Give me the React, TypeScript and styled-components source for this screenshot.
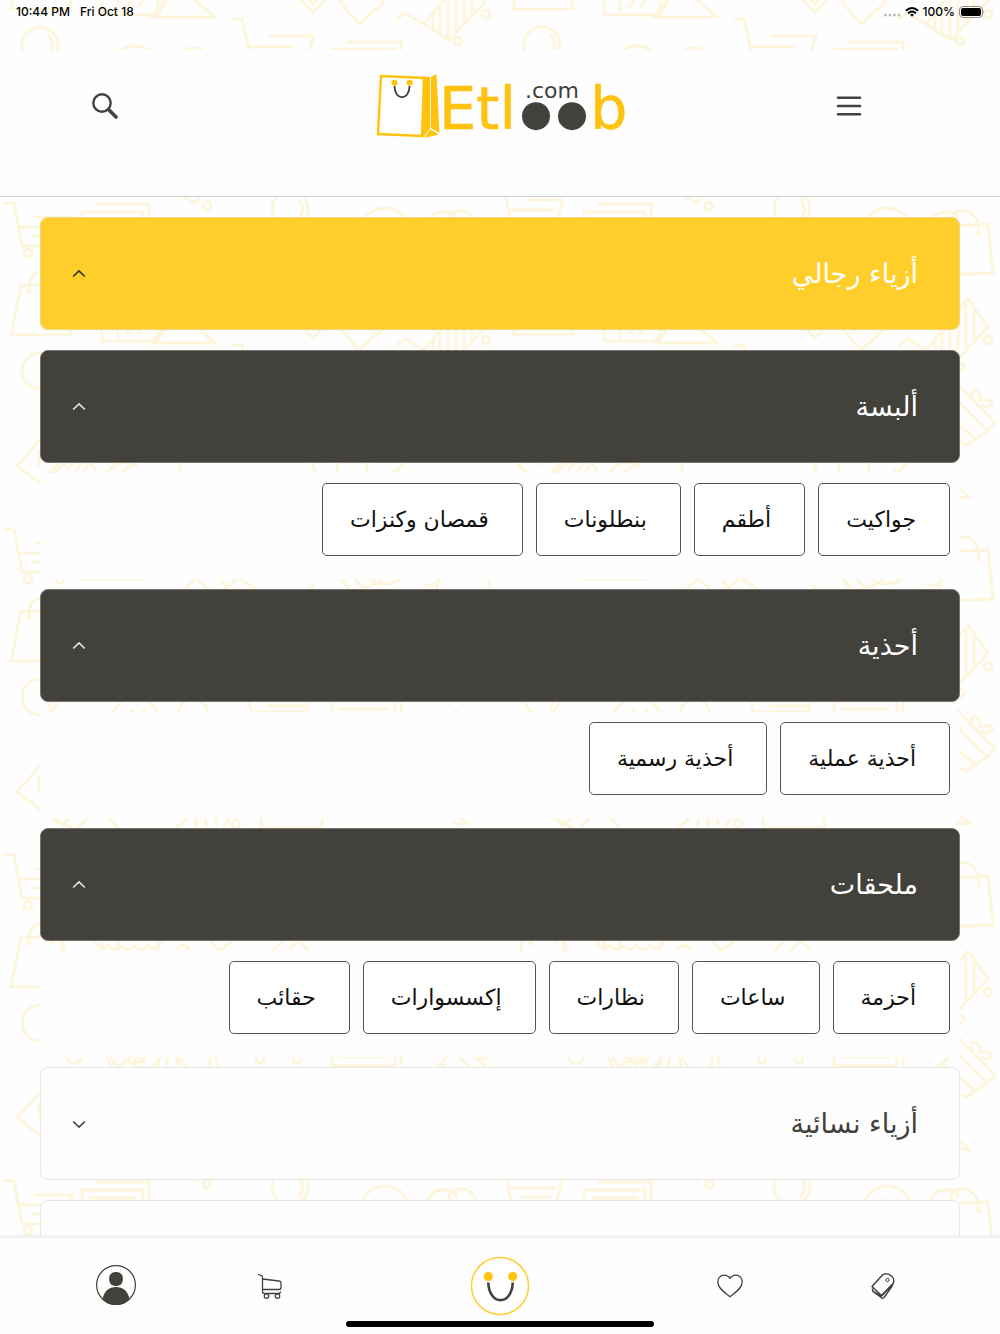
import React from "react";
import styled, { createGlobalStyle } from "styled-components";

const colors = {
  ink: "#42413c",
  yellow: "#ffce2b",
  brand: "#ffc20e",
  doodle: "#fdf6dc",
  white: "#fefefe",
};

const GlobalStyle = createGlobalStyle`
  *, *::before, *::after { box-sizing: border-box; }
  body { margin: 0; background: ${colors.white}; }
  button { font: inherit; color: inherit; padding: 0; border: 0; background: none; cursor: pointer; }
  svg { display: block; }
`;

const Screen = styled.div`
  position: relative;
  isolation: isolate;
  display: flex;
  flex-direction: column;
  height: 100vh;
  overflow: hidden;
  font-family: "DejaVu Sans", sans-serif;
  color: ${colors.ink};
`;

const Backdrop = styled.svg`
  position: absolute;
  inset: 0;
  width: 100%;
  height: 100%;
  z-index: -1;
`;

const StatusBar = styled.div`
  display: flex;
  justify-content: space-between;
  align-items: flex-start;
  height: 50px;
  padding: 4px 15px 0 16px;
  font: 500 12px/16px Inter, sans-serif;
  color: #000;
`;

const StatusGroup = styled.div<{ $gap: number }>`
  display: flex;
  align-items: center;
  gap: ${(p) => p.$gap}px;
`;

const Header = styled.header`
  display: flex;
  justify-content: space-between;
  align-items: flex-start;
  height: 147px;
  padding: 20px 129px 0 83px;
  background: ${colors.white};
  border-bottom: 1px solid #d0d0d0;
`;

const IconButton = styled.button`
  display: grid;
  place-items: center;
  width: 44px;
  height: 72px;
`;

const LogoLink = styled.a`
  display: block;
  margin-left: 50px;
`;

const Main = styled.main`
  flex: 1;
  min-height: 0;
  overflow-y: auto;
  scrollbar-width: none;
  padding: 20px 40px;
`;

const Bar = styled.button<{ $tone: "yellow" | "dark" | "plain" }>`
  display: flex;
  justify-content: space-between;
  align-items: center;
  width: 100%;
  height: 113px;
  padding: 0 41px 0 31px;
  border: 1px solid
    ${(p) => (p.$tone === "plain" ? "#e6e6e6" : p.$tone === "dark" ? "#77766f" : "#ecd68a")};
  border-radius: 8px;
  background: ${(p) =>
    p.$tone === "yellow" ? colors.yellow : p.$tone === "dark" ? colors.ink : colors.white};
  color: ${(p) => (p.$tone === "plain" ? colors.ink : "#fff")};
  font-size: 27px;
  line-height: 40px;
`;

const Stack = styled.div<{ $gap: number }>`
  display: flex;
  flex-direction: column;
  gap: ${(p) => p.$gap}px;
`;

const Chips = styled.div`
  display: flex;
  flex-wrap: wrap;
  gap: 13px;
  padding: 10px 10px 23px;
  background: ${colors.white};
`;

const Chip = styled.a`
  display: flex;
  align-items: center;
  height: 73px;
  padding: 0 33px 0 27px;
  border: 1px solid #55544f;
  border-radius: 5px;
  background: #fff;
  color: #111;
  font-size: 22px;
  line-height: 32px;
  text-decoration: none;
  white-space: nowrap;
`;

const BottomNav = styled.nav`
  position: relative;
  display: grid;
  grid-template-columns: 1fr 1fr 2fr 1fr 1fr;
  height: 98px;
  padding: 0 39px 1px;
  background: ${colors.white};
  border-top: 2px solid #f0f0f0;
  box-shadow: 0 -1px 3px rgba(0, 0, 0, 0.04);
`;

const NavLink = styled.a`
  display: grid;
  place-items: center;
  color: ${colors.ink};
`;

const HomeIndicator = styled.span`
  position: absolute;
  left: 50%;
  bottom: 7px;
  width: 308px;
  height: 6px;
  margin-left: -154px;
  border-radius: 3px;
  background: #000;
`;

const Doodles = () => (
  <Backdrop aria-hidden="true">
    <defs>
      <g id="doodle-goods">
        {/* shopping bag, left */}
        <path d="M29 285H21L11 335H71L62 285H29M29 291C28 277 35 272 41 272S54 277 53 291" />
        <circle cx="29" cy="291" r="1" />
        {/* framed picture */}
        <path d="M102 285H158V341H102ZM118 285V341M127 333L135 323M138 333L148 321" />
        <path d="M151 343H215L178 312ZM155 343L164 331" />
        {/* coupon tips */}
        <path d="M298 323L313 338L328 323L313 306ZM306 323L313 330L320 323M340 328L361 306L384 328L359 350Z" />
        {/* striped fish */}
        <path d="M397 345L405 339L424 350L466 299L486 327L449 366L424 350M433 340V356M440 332V361M448 323V365M456 313V358M464 304V349M472 309V341" />
        <circle cx="486" cy="340" r="4" />
        <circle cx="458" cy="367" r="4" />
        {/* balloon */}
        <circle cx="40" cy="45" r="18" />
        <path d="M49 35Q56 45 49 54M46 62L57 74" />
        {/* smiley and purse */}
        <circle cx="135" cy="71" r="25" />
        <path d="M128 62L132 58L136 62M141 62L145 58M120 76Q135 94 150 76M178 60Q181 48 193 48T208 60M172 62H214L208 92H180ZM180 80L188 92" />
        {/* cart */}
        <path d="M233 19H242L254 72H306M270 36H314L306 60H252M248 47H292M268 54H308" />
        <circle cx="260" cy="81" r="4" />
        <circle cx="297" cy="81" r="4" />
        {/* card stack */}
        <path d="M348 42H401V86M332 49H395V88H332ZM340 57H387M340 79H387" />
        {/* gift */}
        <path d="M448 67L485 105L493 97L456 59ZM453 73L427 98L464 119L485 105M440 85L474 113M470 73C467 60 479 62 478 75C492 70 496 83 478 80" />
        {/* price tag */}
        <path d="M40 114L17 140L40 157L70 134V114ZM39 126V139" />
        {/* lower row of mixed goods */}
        <path d="M50 146L67 130L90 137L96 146L76 166ZM67 143L74 136M76 144L82 137M84 144L90 137M108 146Q120 130 138 141M122 146L136 136M180 151V128M315 147L309 126M337 147V136H367V149M345 136V128M392 146Q406 142 403 130M88 166L75 178L52 166M52 166L62 173L70 166M109 166L128 187M174 178L190 164M196 176V158M206 176V158M216 172V158M222 178L230 164M261 164V176H322V164" />
        <circle cx="236" cy="172" r="4" />
        {/* ledger */}
        <path d="M97 204H149V235M82 212H143V250H82ZM90 220H135M181 196L195 203L200 198" />
        <circle cx="207" cy="206" r="4" />
        <circle cx="290" cy="209" r="18" />
        <path d="M299 200Q306 210 299 219" />
        <circle cx="385" cy="233" r="25" />
        <circle cx="384" cy="224" r="2" />
        {/* bag, right edge */}
        <path d="M440 226L486 224L491 273L436 275ZM449 224C448 210 456 211 463 211S478 220 476 232M428 224Q431 212 443 212T456 218" />
        <circle cx="477" cy="233" r="1" />
        {/* ribbons, zigzags and frills */}
        <path d="M82 253H144M184 264L196 252L209 264M220 252L226 262L238 252L254 262M310 266L313 260M355 252Q363 270 382 252M340 252L350 264M425 258Q430 264 440 254" />
        <path d="M60 289Q62 292 62 298M95 289Q100 300 108 293Q115 302 121 293Q128 302 134 293Q142 302 148 293Q156 302 162 289M176 297Q182 290 189 297M210 289L220 299L232 289M272 299L284 288M288 299L299 288M300 290L308 298" />
        <path d="M67 80Q74 92 82 80M107 79L111 90M117 90L131 79M157 90L160 79M165 90L168 79M216 79L218 90M455 171L468 172L459 164" />
        <circle cx="139" cy="85" r="5" />
      </g>
      <g id="doodle-trolley">
        <path d="M5 203H14L22 246H69M36 217H73L66 242M20 227H64M32 236H60" />
        <circle cx="28" cy="253" r="4" />
        <circle cx="60" cy="253" r="4" />
      </g>
      <g
        id="doodle-sheet"
        fill="none"
        stroke={colors.doodle}
        strokeWidth="3"
        strokeLinejoin="round"
        strokeLinecap="round"
      >
        <use href="#doodle-goods" />
        <use href="#doodle-goods" x="502" />
        <use href="#doodle-trolley" />
        <use href="#doodle-trolley" x="490" y="-17" />
      </g>
      <pattern id="doodles" width="1004" height="326" patternUnits="userSpaceOnUse">
        <use href="#doodle-sheet" />
        <use href="#doodle-sheet" y="-326" />
      </pattern>
    </defs>
    <rect width="100%" height="100%" fill="url(#doodles)" />
  </Backdrop>
);

const Logo = () => (
  <svg width="256" height="76" viewBox="374 70 256 76" role="img" aria-label="Etloob.com">
    <path d="M381 76L424 78L422 136L378 134Z" fill="#fff" stroke={colors.brand} strokeWidth="2.4" />
    <path d="M423 76.500L430 77V129L422.500 138ZM430.800 77L436.500 74L439.500 133L430.800 128Z" fill={colors.brand} />
    <path d="M424 138L430.500 129.500L439 134.500Z" fill={colors.brand} />
    <path d="M394.500 86C394.500 101 409.500 101 409.500 86" fill="none" stroke={colors.ink} strokeWidth="1.8" />
    <circle cx="394.500" cy="82.700" r="3" fill={colors.brand} />
    <circle cx="409.700" cy="82.700" r="3" fill={colors.brand} />
    <g fontFamily="DejaVu Sans, sans-serif">
      <text x="439" y="129" fontSize="59" fill={colors.brand} stroke={colors.brand} strokeWidth="0.5">Etl</text>
      <text x="590" y="129" fontSize="59" fill={colors.brand} stroke={colors.brand} strokeWidth="0.5">b</text>
      <text x="525" y="98" fontSize="22" fill={colors.ink}>.com</text>
    </g>
    <circle cx="536" cy="116.200" r="14" fill={colors.ink} />
    <circle cx="572" cy="116.200" r="14" fill={colors.ink} />
  </svg>
);

const Chevron = ({ up, color }: { up: boolean; color: string }) => (
  <svg width="14" height="10" viewBox="0 0 14 10" fill="none" stroke={color} strokeWidth="1.700" aria-hidden="true">
    <path d={up ? "M1.200 7.500L7 2L12.800 7.500" : "M1.200 2.500L7 8L12.800 2.500"} />
  </svg>
);

const groups = [
  { title: "ألبسة", items: ["جواكيت", "أطقم", "بنطلونات", "قمصان وكنزات"] },
  { title: "أحذية", items: ["أحذية عملية", "أحذية رسمية"] },
  { title: "ملحقات", items: ["أحزمة", "ساعات", "نظارات", "إكسسوارات", "حقائب"] },
];

export default function App() {
  return (
    <Screen>
      <GlobalStyle />
      <Doodles />
      <StatusBar>
        <StatusGroup $gap={10}>
          <span>10:44 PM</span>
          <span>Fri Oct 18</span>
        </StatusGroup>
        <StatusGroup $gap={4}>
          <svg width="18" height="12" viewBox="0 0 18 12" fill="#bdbdb8" aria-hidden="true">
            <circle cx="2.500" cy="9" r="1.500" />
            <circle cx="7" cy="9" r="1.500" />
            <circle cx="11.500" cy="9" r="1.500" />
            <circle cx="16" cy="9" r="1.500" />
          </svg>
          <svg width="14" height="10" viewBox="0 0 14 10" fill="none" stroke="#000" strokeWidth="1.900" aria-hidden="true">
            <path d="M0.800 3.800Q7 -1.800 13.200 3.800M3 6.200Q7 2.600 11 6.200" />
            <path d="M5 7.600Q7 6 9 7.600L7 9.800Z" fill="#000" stroke="none" />
          </svg>
          <span>100%</span>
          <svg width="26" height="12" viewBox="0 0 26 12" aria-hidden="true">
            <rect x="0.500" y="0.500" width="23" height="11" rx="3.500" fill="none" stroke="#8e8e8a" />
            <rect x="2" y="2" width="20" height="8" rx="2" />
            <path d="M24.500 4.200Q26 6 24.500 7.800Z" fill="#8e8e8a" />
          </svg>
        </StatusGroup>
      </StatusBar>

      <Header>
        <IconButton aria-label="بحث">
          <svg width="26" height="26" viewBox="0 0 26 26" fill="none" stroke={colors.ink} aria-hidden="true">
            <circle cx="10" cy="10" r="8.700" strokeWidth="2.400" />
            <path d="M16.500 16.500L24 24" strokeWidth="3.600" strokeLinecap="round" />
          </svg>
        </IconButton>
        <LogoLink href="#home">
          <Logo />
        </LogoLink>
        <IconButton aria-label="القائمة">
          <svg width="26" height="20" viewBox="0 0 26 20" stroke={colors.ink} strokeWidth="2.600" strokeLinecap="round" aria-hidden="true">
            <path d="M2 1.700H24M2 10H24M2 18.300H24" />
          </svg>
        </IconButton>
      </Header>

      <Main>
        <Stack $gap={20}>
          <Bar $tone="yellow" aria-expanded="true">
            <Chevron up color="#33312b" />
            <span dir="rtl">أزياء رجالي</span>
          </Bar>
          <Stack $gap={10}>
            {groups.map((group) => (
              <React.Fragment key={group.title}>
                <Bar $tone="dark" aria-expanded="true">
                  <Chevron up color="#e4e4e2" />
                  <span dir="rtl">{group.title}</span>
                </Bar>
                <Chips dir="rtl">
                  {group.items.map((item) => (
                    <Chip key={item} href="#category">
                      {item}
                    </Chip>
                  ))}
                </Chips>
              </React.Fragment>
            ))}
            <Bar $tone="plain" aria-expanded="false">
              <Chevron up={false} color={colors.ink} />
              <span dir="rtl">أزياء نسائية</span>
            </Bar>
          </Stack>
          <Bar $tone="plain" aria-expanded="false" />
        </Stack>
      </Main>

      <BottomNav>
        <NavLink href="#account" aria-label="حسابي">
          <svg width="42" height="42" viewBox="0 0 42 42" aria-hidden="true">
            <circle cx="21" cy="20" r="19.400" fill="none" stroke={colors.ink} strokeWidth="1.200" />
            <rect x="14.200" y="7" width="13.600" height="14" rx="6" fill={colors.ink} />
            <path d="M7.500 34.500C9 26 14 22 21 22S33 26 34.500 34.500Q29 40 21 40T7.500 34.500Z" fill={colors.ink} />
          </svg>
        </NavLink>
        <NavLink href="#cart" aria-label="السلة">
          <svg width="26" height="26" viewBox="0 0 26 26" fill="none" stroke={colors.ink} strokeWidth="1.300" strokeLinecap="round" strokeLinejoin="round" aria-hidden="true">
            <path d="M2.500 1.500L5.500 2.600Q6.500 3 6.500 4.500V18.500Q6.500 20.500 8.500 20.500H22.500Q24 20.500 24.500 19M6.500 6L23 8Q25 8.300 25 10V14.500Q25 16.500 23 16.500H6.500" />
            <circle cx="10.500" cy="23" r="2.200" />
            <circle cx="21.500" cy="23" r="2.200" />
          </svg>
        </NavLink>
        <NavLink href="#home" aria-label="الرئيسية">
          <svg width="60" height="60" viewBox="0 0 60 60" fill="none" aria-hidden="true">
            <circle cx="30" cy="30" r="28.500" fill="#fff" stroke="#ffcf3a" strokeWidth="1.600" />
            <path d="M18.300 26.500C19 50 42 50 42.700 26.500" stroke={colors.ink} strokeWidth="2.600" />
            <circle cx="18.300" cy="20.500" r="4.500" fill={colors.brand} />
            <circle cx="42.700" cy="20.500" r="4.500" fill={colors.brand} />
          </svg>
        </NavLink>
        <NavLink href="#favourites" aria-label="المفضلة">
          <svg width="26" height="24" viewBox="0 0 26 24" fill="none" stroke={colors.ink} strokeWidth="1.300" strokeLinejoin="round" aria-hidden="true">
            <path d="M13 4.500C11.500 2 9.500 1.200 7.200 1.200C3.500 1.200 0.800 4 0.800 8C0.800 14.500 8 18.500 13 22.800C18 18.500 25.200 14.500 25.200 8C25.200 4 22.500 1.200 18.800 1.200C16.500 1.200 14.500 2 13 4.500Z" />
          </svg>
        </NavLink>
        <NavLink href="#offers" aria-label="العروض">
          <svg width="28" height="28" viewBox="0 0 28 28" fill="none" stroke={colors.ink} strokeWidth="1.500" strokeLinejoin="round" aria-hidden="true">
            <path d="M2 14.500L12.500 3Q14 1.500 16.500 1.700Q19 1.800 21.500 4Q24.200 6.500 23.800 9Q23.700 11 22.500 12.500L11.500 23.500Z" />
            <path d="M2.200 16.500L3 19.500L11.500 24L23 11.500M3 19.500L12.500 26.500L14 25.500L22.500 13.500" />
            <circle cx="17.500" cy="8" r="1.600" strokeWidth="1" />
          </svg>
        </NavLink>
        <HomeIndicator />
      </BottomNav>
    </Screen>
  );
}
